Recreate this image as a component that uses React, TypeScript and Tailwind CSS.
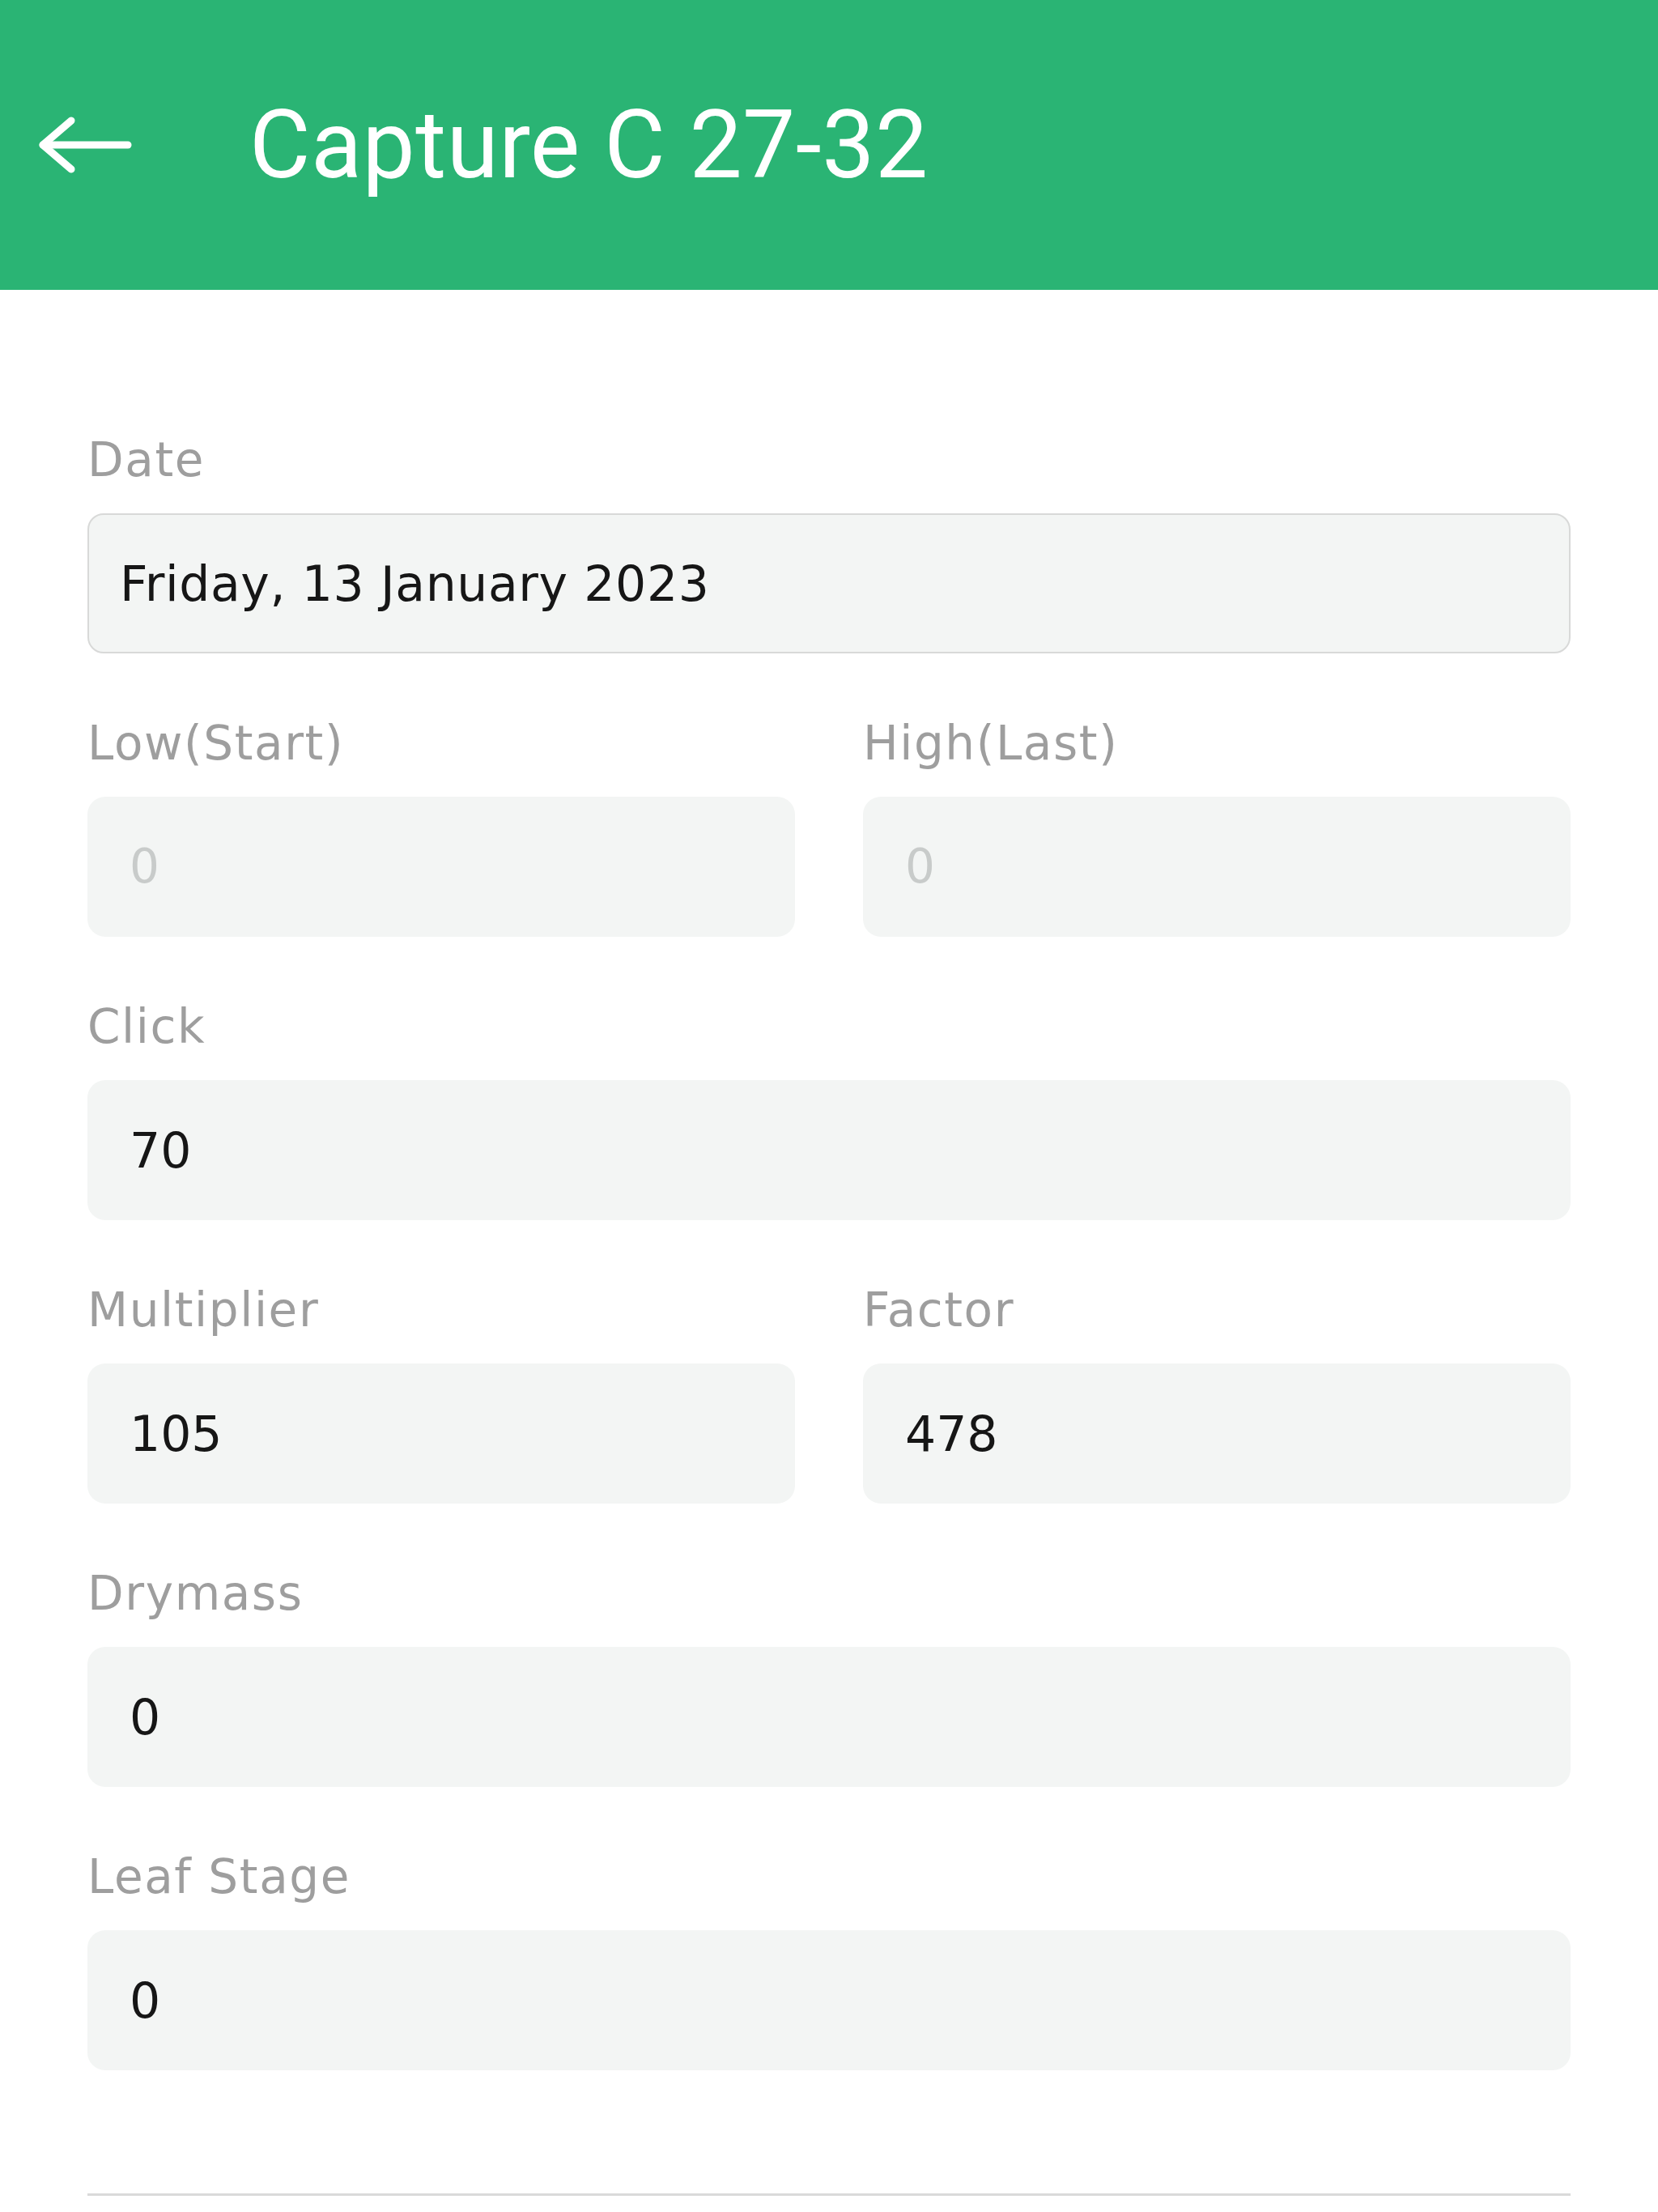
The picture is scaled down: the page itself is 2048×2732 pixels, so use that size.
import React from 'react';

const body = { fontFamily: '"DejaVu Sans", "Noto Sans", sans-serif' };
const titleFont = { fontFamily: 'Roboto, "Noto Sans", sans-serif' };

const Field = ({ label, value, muted }: { label: string; value: string; muted?: boolean }) => (
    <div className="flex flex-col">
        <label className="text-[58px] leading-[64px] mb-[34px] tracking-[1.6px] text-[#9e9e9e]">{label}</label>
        <div className="h-[173px] rounded-[22px] bg-[#f3f5f4] flex items-center pl-[52px]">
            <span className={muted ? 'text-[58px] text-[#c8cbca]' : 'text-[60px] text-[#161616]'}>{value}</span>
        </div>
    </div>
);

export default function App() {
    return (
        <div className="w-[2048px] min-h-[2732px] bg-white flex flex-col" style={body}>
            {/* Шапка */}
            <header className="h-[358px] bg-[#2ab474] flex items-center shrink-0">
                <button className="ml-[44px] w-[124px] h-[80px] flex items-center justify-center">
                    <svg width="124" height="80" viewBox="0 0 124 80" fill="none" stroke="white" strokeWidth="9" strokeLinecap="round" strokeLinejoin="round">
                        <path d="M9 40 H114" />
                        <path d="M44 10 L9 40 L44 70" />
                    </svg>
                </button>
                <h1 className="ml-[140px] text-[116px] leading-none tracking-[0.5px] text-white" style={titleFont}>
                    Capture C 27-32
                </h1>
            </header>

            <form className="px-[108px] pt-[178px] flex flex-col gap-[79px]">
                <div className="flex flex-col">
                    <label className="text-[58px] leading-[64px] mb-[34px] tracking-[1.6px] text-[#9e9e9e]">Date</label>
                    <div className="h-[173px] rounded-[20px] bg-[#f3f5f4] border-2 border-[#d8d9d8] flex items-center pl-[38px]">
                        <span className="text-[60px] tracking-[0.6px] text-[#161616]">Friday, 13 January 2023</span>
                    </div>
                </div>

                <div className="grid grid-cols-2 gap-x-[84px]">
                    <Field label="Low(Start)" value="0" muted />
                    <Field label="High(Last)" value="0" muted />
                </div>

                <Field label="Click" value="70" />

                <div className="grid grid-cols-2 gap-x-[84px]">
                    <Field label="Multiplier" value="105" />
                    <Field label="Factor" value="478" />
                </div>

                <Field label="Drymass" value="0" />
                <Field label="Leaf Stage" value="0" />
            </form>

            <div className="mx-[108px] mt-[152px] h-[3px] bg-[#dadada]" />
        </div>
    );
}
